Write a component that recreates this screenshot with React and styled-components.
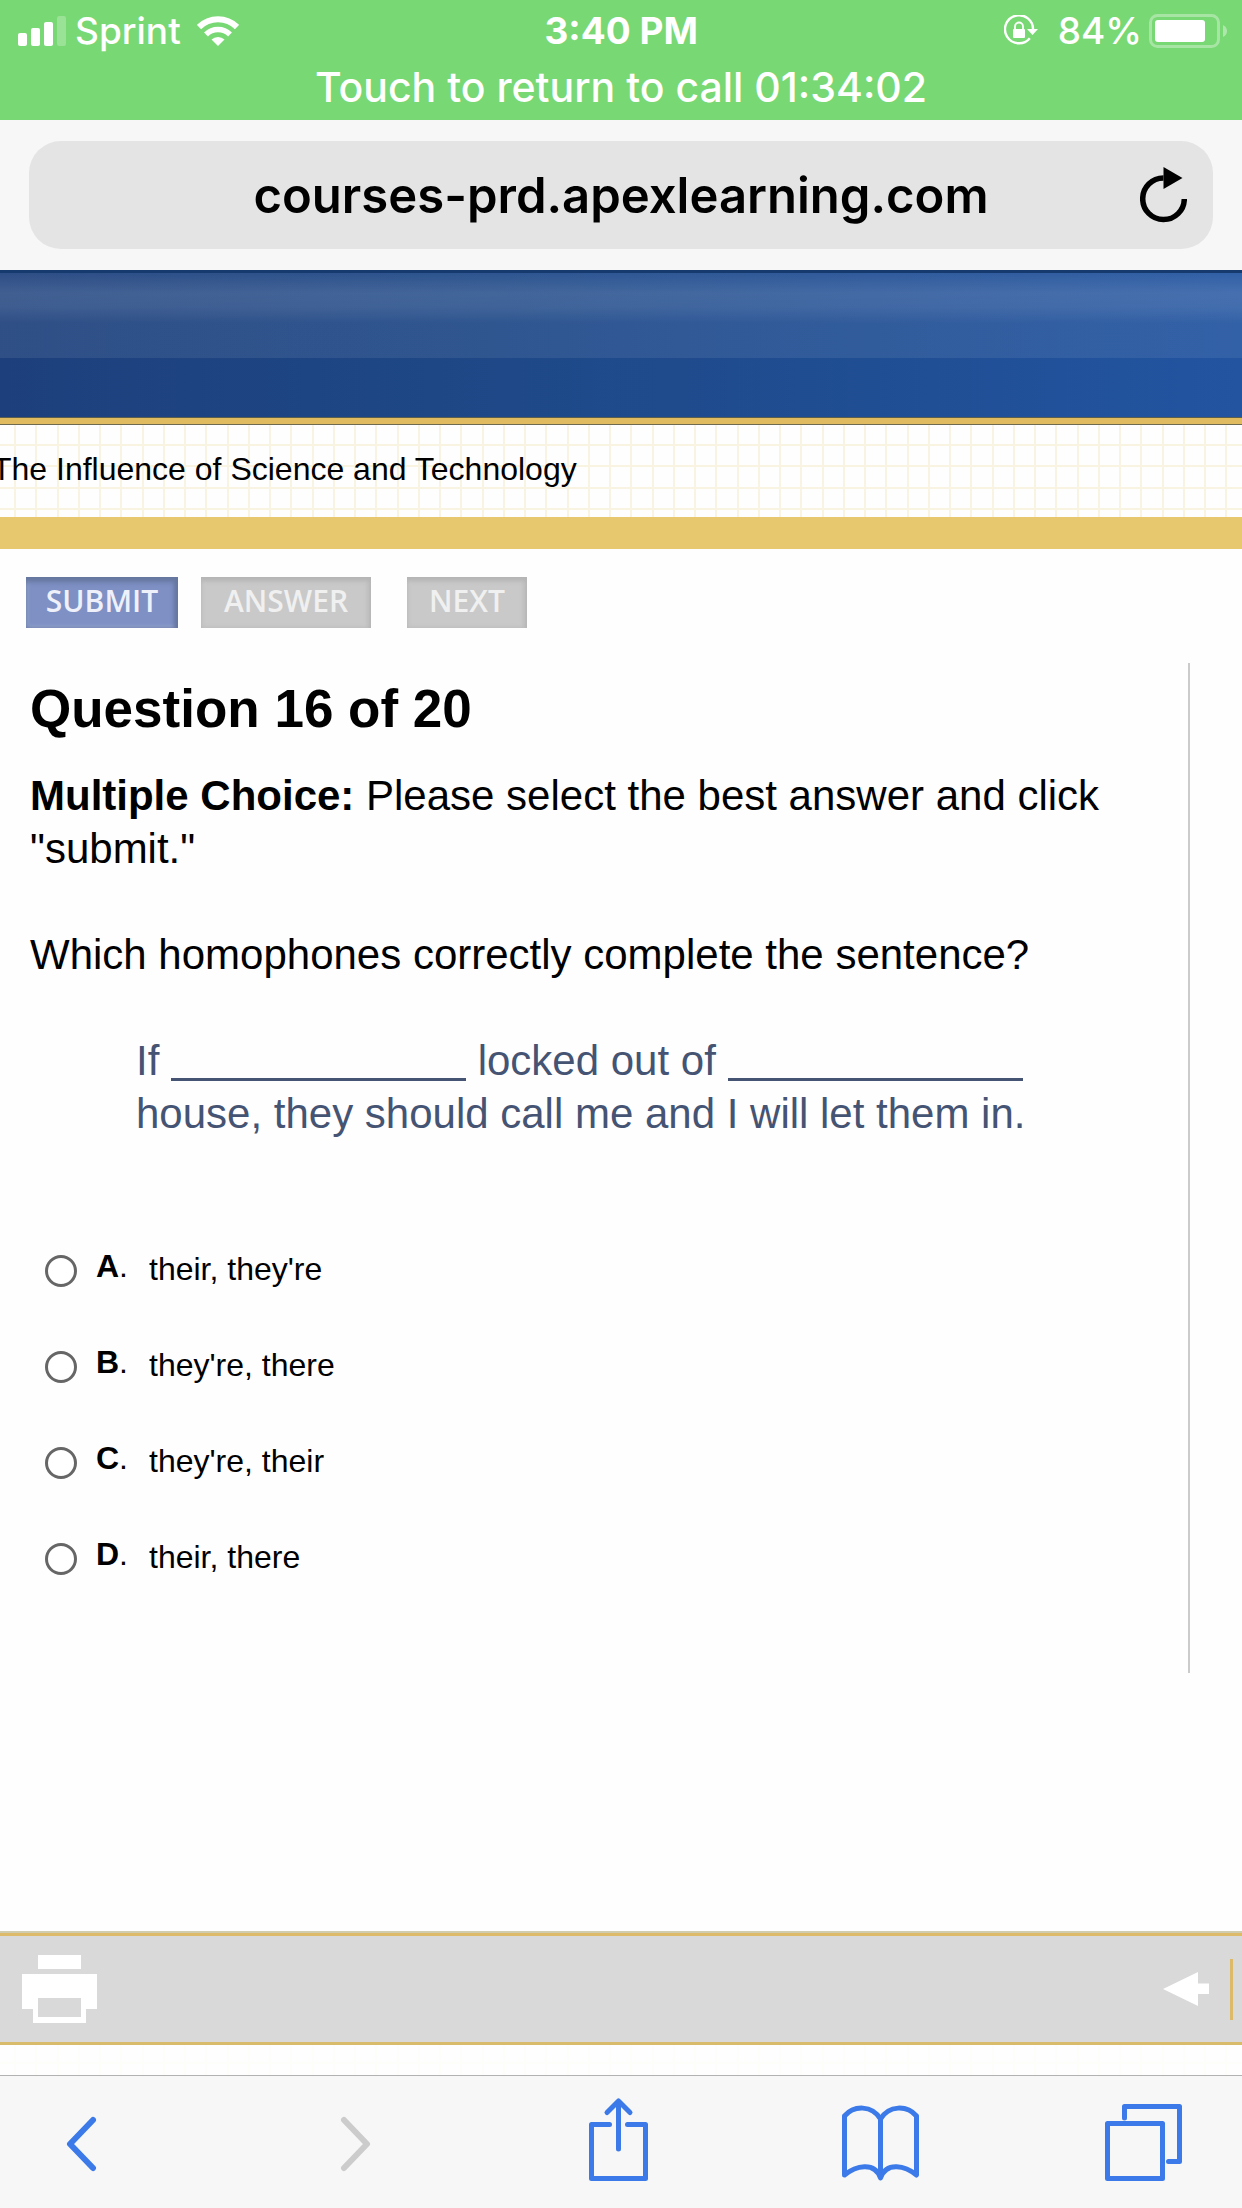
import React, { useState } from 'react';
import styled, { createGlobalStyle } from 'styled-components';

const GlobalStyle = createGlobalStyle`
  * {
    box-sizing: border-box;
  }
  body {
    margin: 0;
    background: #fefefe;
    color: #000;
    font-family: Arial, 'Liberation Sans', sans-serif;
  }
  button {
    border: 0;
    padding: 0;
    background: none;
    font: inherit;
    cursor: pointer;
  }
  svg {
    display: block;
    flex: none;
  }
`;

const Page = styled.div`
  display: flex;
  flex-direction: column;
  min-height: 100vh;
`;

const StatusBar = styled.header`
  height: 120px;
  background: #78d873;
  color: #fff;
  font-family: Inter, sans-serif;
  font-weight: 500;
`;

const StatusRow = styled.div`
  display: flex;
  align-items: center;
  justify-content: space-between;
  height: 61px;
  padding: 0 14px 0 18px;
  font-size: 37px;
`;

const StatusGroup = styled.div`
  display: flex;
  align-items: center;
  gap: ${({ $gap }) => $gap}px;
`;

const Clock = styled.time`
  font-weight: 700;
`;

const CallNotice = styled.button`
  display: block;
  width: 100%;
  color: #fff;
  font-size: 41px;
  line-height: 52px;
  text-align: center;
`;

const AddressBar = styled.div`
  display: flex;
  padding: 21px 29px;
  background: #f7f7f7;
`;

const Address = styled.div`
  display: grid;
  grid-template-columns: 1fr auto 1fr;
  align-items: center;
  width: 100%;
  height: 108px;
  padding: 0 26px;
  border-radius: 32px;
  background: #e4e4e4;
  font-family: Inter, sans-serif;
  font-size: 49px;
  font-weight: 600;
`;

const Domain = styled.span`
  grid-column: 2;
`;

const ReloadButton = styled.button`
  justify-self: end;
`;

const Banner = styled.div`
  height: 148px;
  border-top: 3px solid #173a6e;
  border-bottom: 1px solid #5c5f4c;
  background: linear-gradient(
      rgba(255, 255, 255, 0.07),
      rgba(255, 255, 255, 0.16) 20px,
      rgba(255, 255, 255, 0.15) 34px,
      rgba(255, 255, 255, 0.08) 50px,
      rgba(255, 255, 255, 0.08) 85px,
      transparent 85px
    ),
    linear-gradient(90deg, #1d407c, #1e4887 40%, #2254a0);
`;

const GridPaper = styled.div`
  --line: ${({ $faint }) => ($faint ? '#fdfdfa' : '#f9f3e2')};
  background-color: #fefefe;
  background-image: linear-gradient(
      90deg,
      var(--line) 2px,
      transparent 2px 21px,
      var(--line) 21px 23px,
      transparent 23px 43px,
      var(--line) 43px 45px,
      transparent 45px 64px,
      var(--line) 64px 66px,
      transparent 66px
    ),
    linear-gradient(
      var(--line) 2px,
      transparent 2px 21px,
      var(--line) 21px 23px,
      transparent 23px
    );
  background-size: 85px 100%, 100% 43px;
  background-position: 14px 0, 0 ${({ $faint }) => ($faint ? 60 : 20)}px;
`;

const UnitBar = styled(GridPaper)`
  height: 131px;
  border-top: 6px solid #e0bb5f;
  border-bottom: 32px solid #e8c86f;
  background-clip: padding-box;
  box-shadow: inset 0 1px #6d6a50;
  overflow: hidden;
`;

const UnitTitle = styled.h2`
  margin: 0 0 0 -8px;
  padding-top: 27px;
  font-size: 32px;
  font-weight: 400;
  line-height: 36px;
  white-space: nowrap;
`;

const Main = styled.main`
  flex: 1;
  padding: 28px 52px 0 26px;
`;

const Actions = styled.div`
  display: flex;
  gap: 23px;
`;

const ActionButton = styled.button`
  width: ${({ $width }) => $width}px;
  height: 51px;
  padding-bottom: 4px;
  background: ${({ $primary }) => ($primary ? '#7e90c4' : '#c9c9c9')};
  box-shadow: ${({ $primary }) =>
    $primary
      ? 'inset 0 5px 5px #66779f, inset -4px 0 4px #66779f, inset 3px -3px 3px #92a2d0'
      : 'inset 0 4px 4px #b5b5b5, inset -3px 0 4px #b9b9b9'};
  color: ${({ $primary }) => ($primary ? '#eef1fa' : '#f0f0f0')};
  font-family: 'Open Sans', 'Noto Sans', sans-serif;
  font-size: 30px;
  font-weight: 600;
  line-height: 44px;

  &:last-child {
    margin-left: 13px;
  }
`;

const Quiz = styled.section`
  margin-top: 35px;
  padding: 16px 50px 95px 4px;
  border-right: 2px solid #cbcbcb;
  font-size: 42px;
  line-height: 53px;

  h1 {
    margin: 0 0 30px;
    font-size: 53px;
    line-height: 60px;
  }
  p {
    margin: 0 0 53px;
  }
`;

const Sentence = styled.blockquote`
  margin: 0 0 108px 106px;
  color: #465474;
`;

const Blank = styled.span`
  display: inline-block;
  width: 295px;
  height: 6px;
  border-bottom: 3px solid #465474;
  vertical-align: -6px;
`;

const Options = styled.div`
  display: flex;
  flex-direction: column;
  gap: 54px;
  padding-left: 15px;
`;

const Option = styled.label`
  display: flex;
  align-items: center;
  font-size: 32px;
  line-height: 36px;
  cursor: pointer;
`;

const Radio = styled.input`
  appearance: none;
  width: 32px;
  height: 32px;
  margin: 3px 19px 0 0;
  border: 3px solid #666;
  border-radius: 50%;
  background: #fff;

  &:checked {
    box-shadow: inset 0 0 0 6px #fff, inset 0 0 0 16px #333;
  }
`;

const Letter = styled.span`
  width: 53px;
  padding-bottom: 6px;
`;

const CourseFooter = styled.footer`
  display: flex;
  align-items: center;
  justify-content: space-between;
  height: 112px;
  padding: 0 9px 0 22px;
  border-top: 3px solid #dcba69;
  border-bottom: 3px solid #d9bb6c;
  background: #d9d9d9;
  box-shadow: 0 -2px #d0ccae;
`;

const PreviousPage = styled.div`
  display: flex;
  align-items: center;
  padding-right: 21px;
  height: 61px;
  border-right: 3px solid #dcba69;
`;

const PageEnd = styled(GridPaper)`
  height: 30px;
`;

const Toolbar = styled.nav`
  display: flex;
  justify-content: space-between;
  height: 133px;
  padding: 20px 60px 0 31px;
  border-top: 1px solid #b2b2b2;
  background: #f7f7f7;
`;

const ToolButton = styled.button`
  display: flex;
  justify-content: center;
  width: 77px;
  height: 96px;
  color: #3b7ae8;

  &:first-child {
    width: 100px;
  }
  &:disabled {
    color: #ccc;
  }
`;

const SignalIcon = () => (
  <svg width="48" height="30" fill="#fff" aria-hidden="true">
    <rect x="0" y="17" width="9" height="13" rx="2" />
    <rect x="13" y="12" width="9" height="18" rx="2" />
    <rect x="26" y="6" width="9" height="24" rx="2" />
    <rect x="39" y="0" width="9" height="30" rx="2" opacity=".25" />
  </svg>
);

const WifiIcon = () => (
  <svg width="42" height="30" fill="none" stroke="#fff" aria-hidden="true">
    <path d="M2 11a27 27 0 0 1 38 0" strokeWidth="6" />
    <path d="M9 18.5a17 17 0 0 1 24 0" strokeWidth="5.5" />
    <path d="M21 30l-6.5-6.5a9.5 9.5 0 0 1 13 0z" fill="#fff" stroke="none" />
  </svg>
);

const LockIcon = () => (
  <svg width="34" height="31" fill="none" stroke="#fff" aria-hidden="true">
    <path d="M25.8 23.2A14 14 0 1 1 29 15" strokeWidth="2.4" />
    <path d="M23 14h11l-5.5 6z" fill="#fff" stroke="none" />
    <rect x="9" y="14" width="12" height="9" rx="1" fill="#fff" stroke="none" />
    <path d="M11 15v-3.5a4 4 0 0 1 8 0V15" strokeWidth="1.8" />
  </svg>
);

const BatteryIcon = () => (
  <svg width="79" height="34" aria-hidden="true">
    <rect x="1.5" y="1.5" width="68" height="31" rx="7" fill="none" stroke="#fff" strokeWidth="3" opacity=".35" />
    <rect x="6" y="6" width="50" height="22" rx="3" fill="#fff" />
    <path d="M74 11q4 2 4 6t-4 6z" fill="#fff" opacity=".4" />
  </svg>
);

const ReloadIcon = () => (
  <svg width="47" height="62" aria-hidden="true">
    <path d="M44.3 35A20.8 20.8 0 1 1 23.5 14" fill="none" stroke="#000" strokeWidth="5.5" />
    <path d="M23.5 3v22l19-11z" />
  </svg>
);

const PrinterIcon = () => (
  <svg width="75" height="68" fill="#fff" aria-hidden="true">
    <path d="M16 0h43v14H16z" />
    <path fillRule="evenodd" d="M0 19h75v35H64v14H11V54H0zM16 43v19h43V43z" />
  </svg>
);

const ArrowIcon = () => (
  <svg width="46" height="34" fill="#fff" aria-hidden="true">
    <path d="M0 17L35 0v11.5h11V22H35v12z" />
  </svg>
);

const lineIcon = {
  height: 96,
  fill: 'none',
  stroke: 'currentColor',
  strokeWidth: 5,
  strokeLinecap: 'round',
  strokeLinejoin: 'round',
  'aria-hidden': true,
};

const BackIcon = () => (
  <svg {...lineIcon} width="31" strokeWidth="6">
    <path d="M27 24L4 48l23 24" />
  </svg>
);

const ForwardIcon = () => (
  <svg {...lineIcon} width="31" strokeWidth="6">
    <path d="M4 24l23 24L4 72" />
  </svg>
);

const ShareIcon = () => (
  <svg {...lineIcon} width="59">
    <path d="M20.5 28.5h-18v54h54v-54h-18" />
    <path d="M29.5 53V5M18 16.5L29.5 5 41 16.5" />
  </svg>
);

const BookIcon = () => (
  <svg {...lineIcon} width="77">
    <path d="M38.5 23C30 9 12 9 2.5 20v59c11-9 30-14 36 3 6-17 25-12 36-3V20C65 9 47 9 38.5 23v58" />
  </svg>
);

const TabsIcon = () => (
  <svg {...lineIcon} width="77">
    <path d="M2.5 27.5h55v55h-55zM19.500 22V10.500h55v55H63.500" />
  </svg>
);

const options = [
  { letter: 'A', text: "their, they're" },
  { letter: 'B', text: "they're, there" },
  { letter: 'C', text: "they're, their" },
  { letter: 'D', text: 'their, there' },
];

const App = () => {
  const [answer, setAnswer] = useState(null);

  return (
    <Page>
      <GlobalStyle />
      <StatusBar>
        <StatusRow>
          <StatusGroup $gap={16}>
            <StatusGroup $gap={9}>
              <SignalIcon />
              <span>Sprint</span>
            </StatusGroup>
            <WifiIcon />
          </StatusGroup>
          <Clock>3:40 PM</Clock>
          <StatusGroup $gap={7}>
            <StatusGroup $gap={20}>
              <LockIcon />
              <span>84%</span>
            </StatusGroup>
            <BatteryIcon />
          </StatusGroup>
        </StatusRow>
        <CallNotice type="button">Touch to return to call 01:34:02</CallNotice>
      </StatusBar>
      <AddressBar>
        <Address>
          <Domain>courses-prd.apexlearning.com</Domain>
          <ReloadButton type="button" aria-label="Reload">
            <ReloadIcon />
          </ReloadButton>
        </Address>
      </AddressBar>
      <Banner />
      <UnitBar>
        <UnitTitle>The Influence of Science and Technology</UnitTitle>
      </UnitBar>
      <Main>
        <Actions>
          <ActionButton type="button" $width={152} $primary>
            SUBMIT
          </ActionButton>
          <ActionButton type="button" $width={170}>
            ANSWER
          </ActionButton>
          <ActionButton type="button" $width={120}>
            NEXT
          </ActionButton>
        </Actions>
        <Quiz>
          <h1>Question 16 of 20</h1>
          <p>
            <b>Multiple Choice:</b> Please select the best answer and click
            "submit."
          </p>
          <p id="question">Which homophones correctly complete the sentence?</p>
          <Sentence>
            If <Blank /> locked out of <Blank /> house, they should call me and
            I will let them in.
          </Sentence>
          <Options role="radiogroup" aria-labelledby="question">
            {options.map(({ letter, text }) => (
              <Option key={letter}>
                <Radio
                  type="radio"
                  name="answer"
                  value={letter}
                  checked={answer === letter}
                  onChange={() => setAnswer(letter)}
                />
                <Letter>
                  <b>{letter}</b>.
                </Letter>
                {text}
              </Option>
            ))}
          </Options>
        </Quiz>
      </Main>
      <CourseFooter>
        <button type="button" aria-label="Print">
          <PrinterIcon />
        </button>
        <PreviousPage>
          <button type="button" aria-label="Previous page">
            <ArrowIcon />
          </button>
        </PreviousPage>
      </CourseFooter>
      <PageEnd $faint />
      <Toolbar>
        <ToolButton type="button" aria-label="Back">
          <BackIcon />
        </ToolButton>
        <ToolButton type="button" aria-label="Forward" disabled>
          <ForwardIcon />
        </ToolButton>
        <ToolButton type="button" aria-label="Share">
          <ShareIcon />
        </ToolButton>
        <ToolButton type="button" aria-label="Bookmarks">
          <BookIcon />
        </ToolButton>
        <ToolButton type="button" aria-label="Tabs">
          <TabsIcon />
        </ToolButton>
      </Toolbar>
    </Page>
  );
};

export default App;
